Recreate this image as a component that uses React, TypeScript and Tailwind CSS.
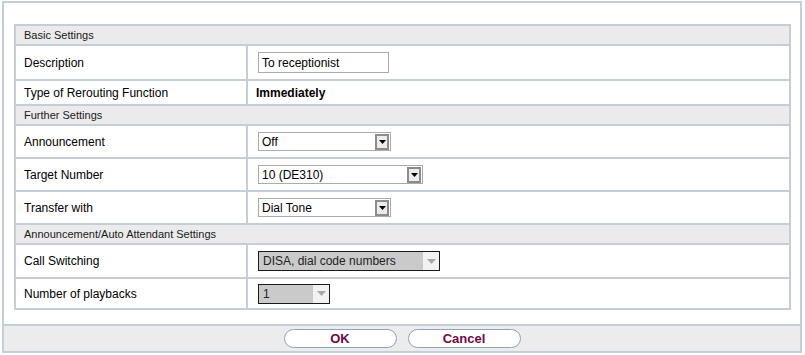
import React from 'react';

const line = 'border-[#c3ced9]';

function SectionHeader({ title }: { title: string }) {
    return (
        <div className={`h-[20px] flex items-center pl-[8px] bg-[#ebebeb] border-t-2 ${line} text-[11px] text-[#1a1a1a]`}>
            {title}
        </div>
    );
}

function Row({ label, height, children }: { label: string; height: string; children: React.ReactNode }) {
    return (
        <div className={`flex ${height} border-t-2 ${line}`}>
            <div className={`w-[232px] shrink-0 flex items-center pl-[8px] border-r-2 ${line} text-[12px] text-black`}>
                {label}
            </div>
            <div className="flex-1 flex items-center pl-[10px]">{children}</div>
        </div>
    );
}

function Select({ value, width }: { value: string; width: string }) {
    return (
        <div className={`${width} h-[19px] border border-[#a5acb2] bg-white flex items-center justify-between pl-[3px] pr-[1px]`}>
            <span className="text-[12px] text-black leading-none">{value}</span>
            <span className="w-[14px] h-[16px] border-2 border-[#8c8c8c] bg-[#ececec] flex items-center justify-center">
                <svg width="7" height="4" viewBox="0 0 7 4">
                    <path d="M0 0H7L3.5 4Z" fill="#000" />
                </svg>
            </span>
        </div>
    );
}

function DisabledSelect({ value, width }: { value: string; width: string }) {
    return (
        <div className={`${width} h-[20px] border border-[#1a1a1a] bg-[#cacaca] flex items-center justify-between pl-[4px]`}>
            <span className="text-[12px] text-[#222] leading-none">{value}</span>
            <span className="w-[16px] h-full bg-[#f2f2f2] flex items-center justify-center">
                <svg width="9" height="5" viewBox="0 0 9 5">
                    <path d="M0 0H9L4.5 5Z" fill="#a8a8a8" />
                </svg>
            </span>
        </div>
    );
}

function Button({ label }: { label: string }) {
    return (
        <button className="w-[113px] h-[19px] rounded-full border border-[#8fa3b8] bg-white text-[13px] font-bold text-[#6e0a45] leading-none">
            {label}
        </button>
    );
}

export default function App() {
    return (
        <div className="w-[805px] h-[355px] bg-white pt-[1px] pl-[2px] font-['Liberation_Sans',Arial,sans-serif]">
            <div className={`w-[800px] h-[352px] border-2 ${line} flex flex-col`}>
                {/* Settings table */}
                <div className="flex-1 pt-[21px] pl-[10px] pr-[9px]">
                    <div className={`border-2 border-t-0 ${line}`}>
                        <SectionHeader title="Basic Settings" />
                        <Row label="Description" height="h-[35px]">
                            <div className="w-[131px] h-[21px] border border-[#a5acb2] flex items-center pl-[3px] text-[12px] text-black">
                                To receptionist
                            </div>
                        </Row>
                        <Row label="Type of Rerouting Function" height="h-[25px]">
                            <span className="-ml-[2px] text-[12px] font-bold text-black">Immediately</span>
                        </Row>
                        <SectionHeader title="Further Settings" />
                        <Row label="Announcement" height="h-[33px]">
                            <Select value="Off" width="w-[133px]" />
                        </Row>
                        <Row label="Target Number" height="h-[33px]">
                            <Select value="10 (DE310)" width="w-[165px]" />
                        </Row>
                        <Row label="Transfer with" height="h-[33px]">
                            <Select value="Dial Tone" width="w-[133px]" />
                        </Row>
                        <SectionHeader title="Announcement/Auto Attendant Settings" />
                        <Row label="Call Switching" height="h-[34px]">
                            <DisabledSelect value="DISA, dial code numbers" width="w-[182px]" />
                        </Row>
                        <Row label="Number of playbacks" height="h-[31px]">
                            <DisabledSelect value="1" width="w-[72px]" />
                        </Row>
                    </div>
                </div>

                {/* Footer buttons */}
                <div className={`h-[27px] border-t-2 ${line} bg-[#ececec] flex items-center justify-center gap-[11px]`}>
                    <Button label="OK" />
                    <Button label="Cancel" />
                </div>
            </div>
        </div>
    );
}
